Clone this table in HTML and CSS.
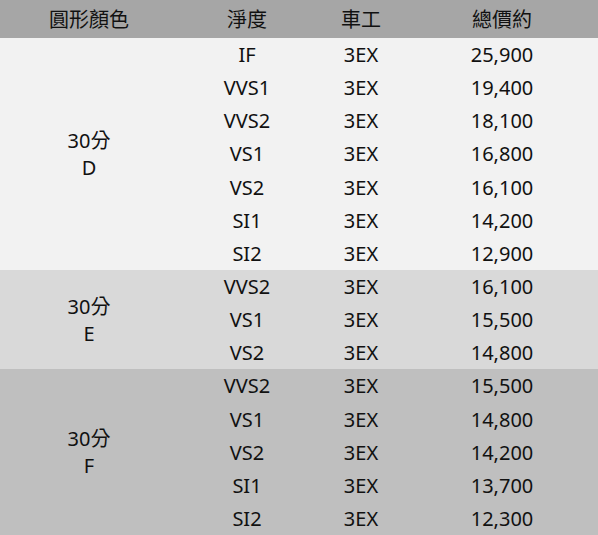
FILE: index.html
```html
<!DOCTYPE html>
<html lang="zh-Hant">
<head>
<meta charset="utf-8">
<title>價格表</title>
<link rel="stylesheet" href="styles.css">
</head>
<body>
<div class="price-table">
  <div class="cell head">圓形顏色</div>
  <div class="cell head">淨度</div>
  <div class="cell head">車工</div>
  <div class="cell head">總價約</div>

  <div class="cell grade g-d span-7">30分<br>D</div>
  <div class="cell g-d">IF</div><div class="cell g-d">3EX</div><div class="cell g-d">25,900</div>
  <div class="cell g-d">VVS1</div><div class="cell g-d">3EX</div><div class="cell g-d">19,400</div>
  <div class="cell g-d">VVS2</div><div class="cell g-d">3EX</div><div class="cell g-d">18,100</div>
  <div class="cell g-d">VS1</div><div class="cell g-d">3EX</div><div class="cell g-d">16,800</div>
  <div class="cell g-d">VS2</div><div class="cell g-d">3EX</div><div class="cell g-d">16,100</div>
  <div class="cell g-d">SI1</div><div class="cell g-d">3EX</div><div class="cell g-d">14,200</div>
  <div class="cell g-d">SI2</div><div class="cell g-d">3EX</div><div class="cell g-d">12,900</div>

  <div class="cell grade g-e span-3">30分<br>E</div>
  <div class="cell g-e">VVS2</div><div class="cell g-e">3EX</div><div class="cell g-e">16,100</div>
  <div class="cell g-e">VS1</div><div class="cell g-e">3EX</div><div class="cell g-e">15,500</div>
  <div class="cell g-e">VS2</div><div class="cell g-e">3EX</div><div class="cell g-e">14,800</div>

  <div class="cell grade g-f span-5">30分<br>F</div>
  <div class="cell g-f">VVS2</div><div class="cell g-f">3EX</div><div class="cell g-f">15,500</div>
  <div class="cell g-f">VS1</div><div class="cell g-f">3EX</div><div class="cell g-f">14,800</div>
  <div class="cell g-f">VS2</div><div class="cell g-f">3EX</div><div class="cell g-f">14,200</div>
  <div class="cell g-f">SI1</div><div class="cell g-f">3EX</div><div class="cell g-f">13,700</div>
  <div class="cell g-f">SI2</div><div class="cell g-f">3EX</div><div class="cell g-f">12,300</div>
</div>
</body>
</html>
```
FILE: styles.css
```css
html, body {
  margin: 0;
  padding: 0;
  background: #ffffff;
}

.price-table {
  width: 598px;
  height: 535px;
  display: grid;
  grid-template-columns: 178px 138px 90px 1fr;
  grid-template-rows: 38px repeat(15, 1fr);
  font-family: "Noto Sans", "Noto Sans CJK TC", sans-serif;
  font-size: 20px;
  color: #111111;
}

.cell {
  display: flex;
  align-items: center;
  justify-content: center;
  text-align: center;
  line-height: 27px;
  white-space: nowrap;
}

.head { background: #a6a6a6; }
.g-d { background: #f2f2f2; }
.g-e { background: #d9d9d9; }
.g-f { background: #bfbfbf; }

.span-7 { grid-row: span 7; }
.span-3 { grid-row: span 3; }
.span-5 { grid-row: span 5; }
```
